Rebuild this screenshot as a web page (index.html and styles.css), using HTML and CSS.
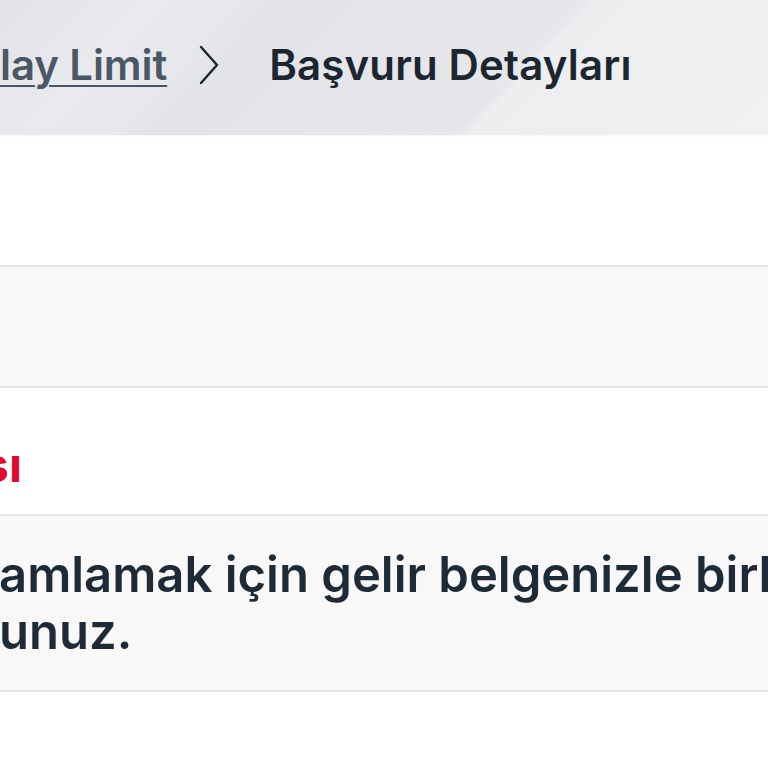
FILE: index.html
```html
<!DOCTYPE html>
<html lang="tr">
<head>
    <meta charset="UTF-8">
    <meta name="viewport" content="width=device-width, initial-scale=1.0">
    <title>Başvuru Detayları</title>
    <link rel="stylesheet" href="styles.css">
</head>
<body>
    <header class="page-head">
        <nav class="crumbs">
            <a class="crumb-link" href="#">lay Limit</a>
            <svg class="crumb-sep" viewBox="0 0 24 40" width="24" height="40" aria-hidden="true">
                <path d="M4 2 L20 20 L4 38" fill="none" stroke="#1c2630" stroke-width="2.4" stroke-linecap="round" stroke-linejoin="round"/>
            </svg>
            <span class="crumb-current">Başvuru Detayları</span>
        </nav>
    </header>
    <main class="details">
        <section class="row row-top"></section>
        <section class="row row-alt row-info"></section>
        <section class="row row-title-row">
            <h2 class="row-title">sı</h2>
        </section>
        <section class="row row-alt row-note">
            <p class="note">amlamak için gelir belgenizle birlikte<br>unuz.</p>
        </section>
        <section class="row row-bottom"></section>
    </main>
</body>
</html>
```

FILE: styles.css
```css
html, body {
    margin: 0;
    padding: 0;
    width: 100%;
    height: 100%;
    background: #ffffff;
    overflow: hidden;
    font-family: Inter, "Noto Sans", sans-serif;
    color: #1e2a35;
}

.page-head {
    height: 135px;
    display: flex;
    align-items: center;
    background: linear-gradient(134deg,
        #e1e3e6 0px,
        #e9eaed 110px,
        #e7e8eb 170px,
        #e2e4e7 200px,
        #e5e7ea 420px,
        #eceef0 432px,
        #f0f1f3 100%);
    box-shadow: 0 1px 2px rgba(0, 0, 0, 0.04);
}

.crumbs {
    display: flex;
    align-items: center;
    padding-bottom: 6px;
}

.crumb-link {
    color: #4a5866;
    font-size: 42px;
    font-weight: 600;
    text-decoration: underline;
    text-decoration-thickness: 2px;
    text-underline-offset: 5px;
    letter-spacing: -0.1px;
}

.crumb-sep {
    margin: 0 48px 0 30px;
}

.crumb-current {
    color: #1c2630;
    font-size: 42px;
    font-weight: 600;
    letter-spacing: 0.15px;
}

.row {
    border-bottom: 2px solid #e8e8e8;
    overflow: hidden;
    white-space: nowrap;
}

.row-alt {
    background: #f8f8f8;
}

.row-top {
    height: 130px;
}

.row-info {
    height: 119px;
}

.row-title-row {
    height: 126px;
}

.row-title {
    margin: 0 0 0 -18px;
    padding-top: 48px;
    line-height: 58px;
    color: #e20a2c;
    font-size: 48px;
    font-weight: 700;
}

.row-note {
    height: 174px;
    display: flex;
    align-items: center;
}

.note {
    margin: 0 0 0 -1px;
    font-size: 49px;
    font-weight: 600;
    line-height: 57px;
    letter-spacing: 0;
}

.row-bottom {
    border-bottom: none;
    height: 100px;
}
```
